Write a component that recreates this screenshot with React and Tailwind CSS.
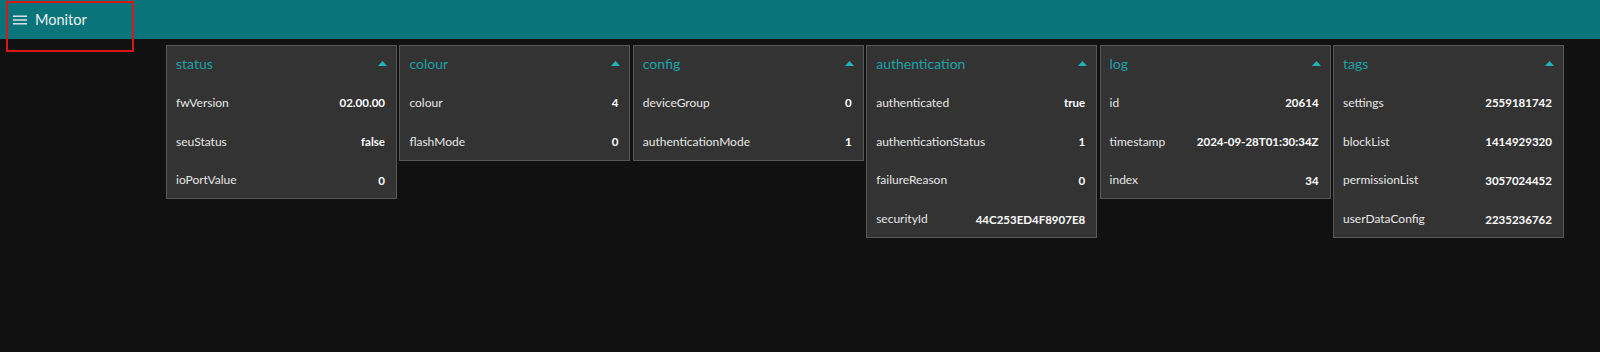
import React from "react";

const groups = [
  {
    title: "status",
    rows: [
      ["fwVersion", "02.00.00"],
      ["seuStatus", "false"],
      ["ioPortValue", "0"],
    ],
  },
  {
    title: "colour",
    rows: [
      ["colour", "4"],
      ["flashMode", "0"],
    ],
  },
  {
    title: "config",
    rows: [
      ["deviceGroup", "0"],
      ["authenticationMode", "1"],
    ],
  },
  {
    title: "authentication",
    rows: [
      ["authenticated", "true"],
      ["authenticationStatus", "1"],
      ["failureReason", "0"],
      ["securityId", "44C253ED4F8907E8"],
    ],
  },
  {
    title: "log",
    rows: [
      ["id", "20614"],
      ["timestamp", "2024-09-28T01:30:34Z"],
      ["index", "34"],
    ],
  },
  {
    title: "tags",
    rows: [
      ["settings", "2559181742"],
      ["blockList", "1414929320"],
      ["permissionList", "3057024452"],
      ["userDataConfig", "2235236762"],
    ],
  },
];

function Caret() {
  return (
    <svg width="9" height="5" viewBox="0 0 9 5" className="block">
      <polygon points="0,5 4.5,0 9,5" fill="#1fb5bb" />
    </svg>
  );
}

function Card({ group }) {
  return (
    <div className="w-[231px] shrink-0 border border-[#585858] bg-[#333333]">
      <div className="flex h-[36px] items-center justify-between pb-[1px] pl-[9px] pr-[9px]">
        <span className="text-[14px] text-[#1aa2a8]">{group.title}</span>
        <Caret />
      </div>
      {group.rows.map(([label, value]) => (
        <div key={label} className="flex h-[38.75px] items-center justify-between pl-[9px] pr-[11px] pt-[3px]">
          <span className="text-[12px] text-[#e6e6e6]">{label}</span>
          <span className="text-[11.5px] font-bold text-white">{value}</span>
        </div>
      ))}
    </div>
  );
}

export default function App() {
  return (
    <div className="relative min-h-[352px] bg-[#111111]" style={{ fontFamily: "Lato, 'Noto Sans', sans-serif" }}>
      <header className="flex h-[39px] items-center gap-[8px] bg-[#097479] pl-[13px]">
        <svg width="14" height="10" viewBox="0 0 14 10" className="block">
          <rect x="0" y="0.5" width="14" height="1.4" fill="#e8eeee" />
          <rect x="0" y="4.3" width="14" height="1.4" fill="#e8eeee" />
          <rect x="0" y="8.1" width="14" height="1.4" fill="#e8eeee" />
        </svg>
        <span className="text-[14.5px] text-[#eef4f4]">Monitor</span>
      </header>

      {/* annotation box over the title */}
      <div className="pointer-events-none absolute left-[6px] top-[1px] h-[51px] w-[128px] border-2 border-[#d81818]" />

      <main className="flex items-start gap-[2.4px] pl-[166px] pt-[6px]">
        {groups.map((g) => (
          <Card key={g.title} group={g} />
        ))}
      </main>
    </div>
  );
}
